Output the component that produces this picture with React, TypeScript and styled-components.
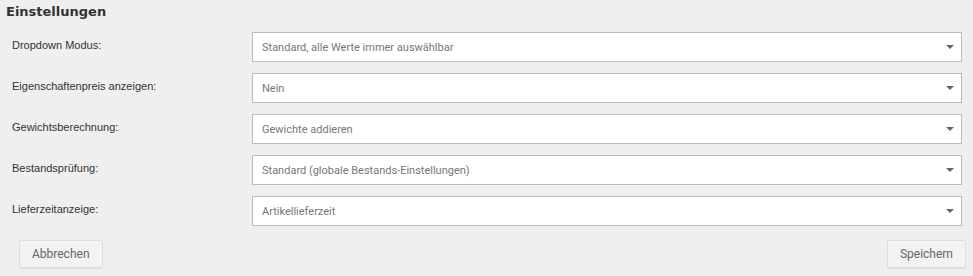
import styled, { createGlobalStyle } from "styled-components";

const GlobalStyle = createGlobalStyle`
  html, body {
    margin: 0;
    padding: 0;
    background: #efefef;
  }
`;

const rows = [
  { label: "Dropdown Modus:", value: "Standard, alle Werte immer auswählbar" },
  { label: "Eigenschaftenpreis anzeigen:", value: "Nein" },
  { label: "Gewichtsberechnung:", value: "Gewichte addieren" },
  { label: "Bestandsprüfung:", value: "Standard (globale Bestands-Einstellungen)" },
  { label: "Lieferzeitanzeige:", value: "Artikellieferzeit" },
];

const Page = styled.div`
  width: 973px;
  height: 276px;
  box-sizing: border-box;
  padding: 5px 7px 0 6px;
  background: #efefef;
`;

const Title = styled.h2`
  margin: 0 0 13px;
  font-family: "DejaVu Sans", sans-serif;
  font-weight: bold;
  font-size: 13px;
  line-height: 14px;
  color: #333;
`;

const Form = styled.div`
  display: flex;
  flex-direction: column;
  gap: 11px;
  padding-right: 4px;
`;

const Row = styled.div`
  display: grid;
  grid-template-columns: 246px 1fr;
  align-items: center;
`;

const Label = styled.label`
  padding-left: 6px;
  margin-bottom: 4px;
  font-family: "Liberation Sans", Arial, sans-serif;
  font-size: 11px;
  color: #333;
`;

const Select = styled.div`
  position: relative;
  height: 30px;
  box-sizing: border-box;
  border: 1px solid #bbb;
  background: #fff;
  display: flex;
  align-items: center;
  padding-left: 9px;
  font-family: Roboto, sans-serif;
  font-size: 11px;
  color: #777;
`;

const Arrow = styled.span`
  position: absolute;
  right: 7px;
  top: 12px;
  width: 0;
  height: 0;
  border-left: 4px solid transparent;
  border-right: 4px solid transparent;
  border-top: 4px solid #666;
`;

const Actions = styled.div`
  display: flex;
  justify-content: space-between;
  margin-top: 14px;
  padding-left: 13px;
`;

const Button = styled.button`
  height: 28px;
  box-sizing: border-box;
  padding: 0 12px;
  border: 1px solid #ddd;
  border-radius: 2px;
  background: #f3f3f3;
  box-shadow: 0 1px 0 #e2e2e2;
  font-family: Roboto, sans-serif;
  font-size: 12px;
  color: #666;
  cursor: pointer;
`;

export default function App() {
  return (
    <Page>
      <GlobalStyle />
      <Title>Einstellungen</Title>
      <Form>
        {rows.map((r) => (
          <Row key={r.label}>
            <Label>{r.label}</Label>
            <Select>
              {r.value}
              <Arrow />
            </Select>
          </Row>
        ))}
      </Form>
      <Actions>
        <Button>Abbrechen</Button>
        <Button>Speichern</Button>
      </Actions>
    </Page>
  );
}
